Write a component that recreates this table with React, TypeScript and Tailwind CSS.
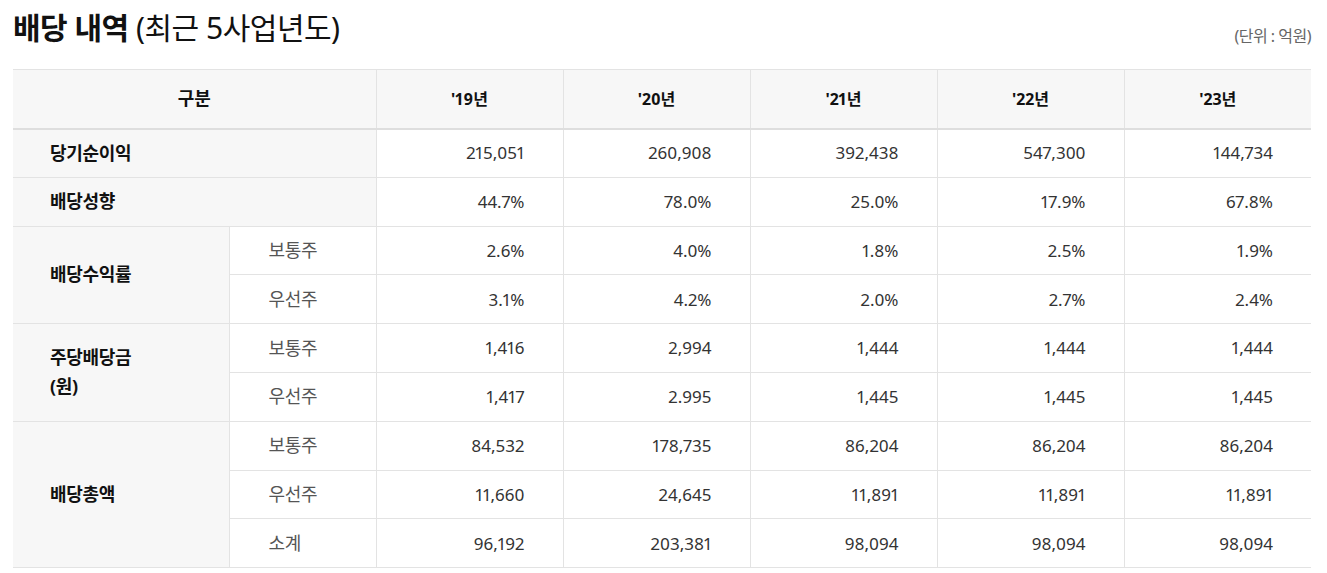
import React from "react";

type Row = {
  label?: string;
  labelSpan?: number;
  sub?: string;
  values: string[];
};

const years = ["'19년", "'20년", "'21년", "'22년", "'23년"];

const rows: Row[] = [
  { label: "당기순이익", values: ["215,051", "260,908", "392,438", "547,300", "144,734"] },
  { label: "배당성향", values: ["44.7%", "78.0%", "25.0%", "17.9%", "67.8%"] },
  { label: "배당수익률", labelSpan: 2, sub: "보통주", values: ["2.6%", "4.0%", "1.8%", "2.5%", "1.9%"] },
  { sub: "우선주", values: ["3.1%", "4.2%", "2.0%", "2.7%", "2.4%"] },
  { label: "주당배당금\n(원)", labelSpan: 2, sub: "보통주", values: ["1,416", "2,994", "1,444", "1,444", "1,444"] },
  { sub: "우선주", values: ["1,417", "2.995", "1,445", "1,445", "1,445"] },
  { label: "배당총액", labelSpan: 3, sub: "보통주", values: ["84,532", "178,735", "86,204", "86,204", "86,204"] },
  { sub: "우선주", values: ["11,660", "24,645", "11,891", "11,891", "11,891"] },
  { sub: "소계", values: ["96,192", "203,381", "98,094", "98,094", "98,094"] },
];

export default function App() {
  return (
    <div className="bg-white px-[13px] font-['Noto_Sans','Noto_Sans_CJK_KR',sans-serif] text-[#333]">
      <div className="flex h-[69px] w-[1298px] items-start justify-between">
        <h2 className="mt-[8px] text-[30px] leading-[40px] tracking-[-0.5px] text-[#111]">
          <span className="font-bold">배당 내역</span> <span className="font-normal">(최근 5사업년도)</span>
        </h2>
        <span className="mt-[25px] text-[16px] leading-[22px] tracking-[-0.5px] text-[#666]">(단위 : 억원)</span>
      </div>

      <table className="w-[1298px] table-fixed border-collapse text-[17px] proportional-nums">
        <colgroup>
          <col className="w-[216px]" />
          <col className="w-[147px]" />
          {years.map((y) => (
            <col key={y} className="w-[187px]" />
          ))}
        </colgroup>
        <thead>
          <tr className="h-[59px] border-t border-b-2 border-t-[#e3e3e3] border-b-[#dedede] bg-[#f7f7f7]">
            <th colSpan={2} className="border-r border-[#e3e3e3] text-center text-[18px] font-bold text-[#111]">
              구분
            </th>
            {years.map((y, i) => (
              <th
                key={y}
                className={
                  i < years.length - 1
                    ? "border-r border-[#e3e3e3] text-center text-[16px] font-bold text-[#111]"
                    : "text-center text-[16px] font-bold text-[#111]"
                }
              >
                {y}
              </th>
            ))}
          </tr>
        </thead>
        <tbody>
          {rows.map((r, ri) => (
            <tr key={ri} className="h-[48.8px] border-b border-[#e3e3e3]">
              {r.label && !r.sub && (
                <td
                  colSpan={2}
                  className="border-r border-[#e3e3e3] bg-[#f7f7f7] pl-[37px] text-[18px] font-bold tracking-[-0.3px] text-[#111]"
                >
                  {r.label}
                </td>
              )}
              {r.label && r.sub && (
                <td
                  rowSpan={r.labelSpan}
                  className="whitespace-pre-line border-r border-[#e3e3e3] bg-[#f7f7f7] pl-[37px] text-[18px] leading-[29px] font-bold tracking-[-0.3px] text-[#111]"
                >
                  {r.label}
                </td>
              )}
              {r.sub && (
                <td className="border-r border-[#e3e3e3] pl-[39px] text-[18px] tracking-[-0.3px] text-[#555]">
                  {r.sub}
                </td>
              )}
              {r.values.map((v, i) => (
                <td
                  key={i}
                  className={
                    i < r.values.length - 1
                      ? "border-r border-[#e3e3e3] pr-[38px] text-right"
                      : "pr-[38px] text-right"
                  }
                >
                  {v}
                </td>
              ))}
            </tr>
          ))}
        </tbody>
      </table>
    </div>
  );
}
